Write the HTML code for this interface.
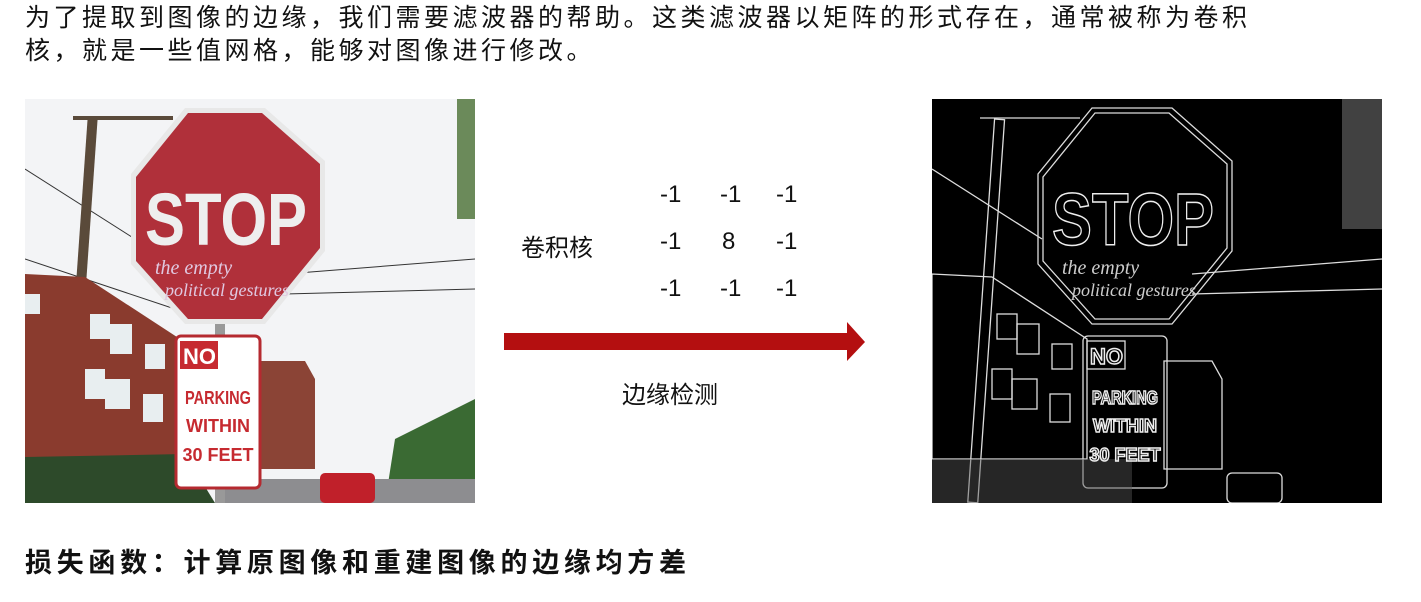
<!DOCTYPE html>
<html><head><meta charset="utf-8"><style>
body{margin:0;width:1421px;height:602px;background:#fff;position:relative;overflow:hidden;font-family:"Liberation Sans","Noto Sans CJK SC",sans-serif;color:#111}
.p{position:absolute;left:25px;top:2px;font-size:25px;line-height:33px;letter-spacing:3.5px;white-space:nowrap}
.t{position:absolute;font-size:24px;white-space:nowrap}
.b{position:absolute;left:25px;top:541px;font-size:27px;font-weight:bold;letter-spacing:4.7px;white-space:nowrap}
svg{position:absolute}
</style></head><body>
<div class="p">为了提取到图像的边缘，我们需要滤波器的帮助。这类滤波器以矩阵的形式存在，通常被称为卷积<br>核，就是一些值网格，能够对图像进行修改。</div>

<svg style="left:25px;top:99px" width="450" height="404" viewBox="0 0 450 404">
<rect width="450" height="404" fill="#f3f4f6"/>
<g stroke="#333" stroke-width="1" fill="none"><line x1="0" y1="70" x2="110" y2="140"/><line x1="0" y1="160" x2="150" y2="210"/><line x1="260" y1="195" x2="450" y2="190"/><line x1="260" y1="175" x2="450" y2="160"/></g>
<rect x="50" y="20" width="10" height="384" fill="#5a4a3a" transform="rotate(4 56 200)"/>
<rect x="48" y="17" width="100" height="4" fill="#5a4a3a"/>
<polygon points="0,175 60,178 155,240 155,360 0,360" fill="#8a3b2e"/>
<polygon points="232,262 280,262 290,280 290,370 232,370" fill="#8b4436"/>
<g fill="#e8eef0"><rect x="65" y="215" width="20" height="25"/><rect x="85" y="225" width="22" height="30"/><rect x="120" y="245" width="20" height="25"/><rect x="60" y="270" width="20" height="30"/><rect x="80" y="280" width="25" height="30"/><rect x="118" y="295" width="20" height="28"/><rect x="0" y="195" width="15" height="20"/></g>
<rect x="432" y="0" width="18" height="120" fill="#6b8a5a"/>
<polygon points="0,358 160,355 190,404 0,404" fill="#2d4a2a"/>
<polygon points="370,340 450,300 450,404 360,404" fill="#3a6a33"/>
<rect x="190" y="380" width="260" height="24" fill="#8d8d90"/>
<rect x="295" y="374" width="55" height="30" rx="5" fill="#c0202a"/>
<rect x="190" y="220" width="10" height="184" fill="#999"/>
<polygon points="160,9 240,9 300,62 300,152 240,225 160,225 106,165 106,75" fill="#e8e8e8"/>
<polygon points="163,14 237,14 295,65 295,149 237,220 163,220 111,162 111,78" fill="#b0303a"/>
<text x="120" y="146" font-family="Liberation Sans" font-size="74" fill="#eee" font-weight="bold" textLength="162" lengthAdjust="spacingAndGlyphs">STOP</text>
<text x="130" y="175" font-family="Liberation Serif" font-style="italic" font-size="20" fill="#e0c8e0">the empty</text>
<text x="140" y="197" font-family="Liberation Serif" font-style="italic" font-size="18" fill="#e0c8e0">political gestures</text>
<rect x="151" y="237" width="84" height="152" rx="5" fill="#fff" stroke="#b52a30" stroke-width="3"/>
<rect x="155" y="242" width="38" height="28" fill="#c62a30"/>
<text x="158" y="265" font-size="22" font-weight="bold" fill="#fff" font-family="Liberation Sans">NO</text>
<text x="193" y="305" text-anchor="middle" font-size="18" font-weight="bold" fill="#c62a30" font-family="Liberation Sans" textLength="66" lengthAdjust="spacingAndGlyphs">PARKING</text>
<text x="193" y="333" text-anchor="middle" font-size="18" font-weight="bold" fill="#c62a30" font-family="Liberation Sans">WITHIN</text>
<text x="193" y="362" text-anchor="middle" font-size="18" font-weight="bold" fill="#c62a30" font-family="Liberation Sans">30 FEET</text>
</svg>

<div class="t" style="left:521px;top:228px">卷积核</div>
<div class="t" style="left:660px;top:181px">-1</div><div class="t" style="left:720px;top:181px">-1</div><div class="t" style="left:776px;top:181px">-1</div>
<div class="t" style="left:660px;top:228px">-1</div><div class="t" style="left:722px;top:228px">8</div><div class="t" style="left:776px;top:228px">-1</div>
<div class="t" style="left:660px;top:275px">-1</div><div class="t" style="left:720px;top:275px">-1</div><div class="t" style="left:776px;top:275px">-1</div>
<svg style="left:504px;top:322px" width="362" height="40"><rect x="0" y="11" width="344" height="17" fill="#b40f10"/><polygon points="343,0 361,20 343,39" fill="#b40f10"/></svg>
<div class="t" style="left:622px;top:375px">边缘检测</div>

<svg style="left:932px;top:99px" width="450" height="404" viewBox="0 0 450 404">
<rect width="450" height="404" fill="#000"/>
<g stroke="#ddd" stroke-width="1.3" fill="none">
<line x1="0" y1="70" x2="110" y2="140"/><line x1="260" y1="195" x2="450" y2="190"/><line x1="260" y1="175" x2="450" y2="160"/>
<rect x="50" y="20" width="10" height="384" transform="rotate(4 56 200)"/>
<line x1="48" y1="19" x2="148" y2="19"/>
<polygon points="0,175 60,178 155,240 155,360 0,360"/>
<rect x="65" y="215" width="20" height="25"/><rect x="85" y="225" width="22" height="30"/><rect x="120" y="245" width="20" height="25"/><rect x="60" y="270" width="20" height="30"/><rect x="80" y="280" width="25" height="30"/><rect x="118" y="295" width="20" height="28"/>
<polygon points="232,262 280,262 290,280 290,370 232,370"/>
<polygon points="160,9 240,9 300,62 300,152 240,225 160,225 106,165 106,75"/>
<polygon points="163,14 237,14 295,65 295,149 237,220 163,220 111,162 111,78"/>
<rect x="151" y="237" width="84" height="152" rx="5"/>
<rect x="155" y="242" width="38" height="28"/>
<rect x="295" y="374" width="55" height="30" rx="5"/>
</g>
<rect x="410" y="0" width="40" height="130" fill="#777" opacity=".55"/>
<rect x="0" y="360" width="200" height="44" fill="#555" opacity=".45"/>
<g fill="none" stroke="#eee" stroke-width="1.5" font-family="Liberation Sans" font-weight="bold">
<text x="120" y="146" font-size="74" textLength="162" lengthAdjust="spacingAndGlyphs">STOP</text>
<text x="193" y="305" text-anchor="middle" font-size="18" textLength="66" lengthAdjust="spacingAndGlyphs">PARKING</text>
<text x="193" y="333" text-anchor="middle" font-size="18">WITHIN</text>
<text x="193" y="362" text-anchor="middle" font-size="18">30 FEET</text>
<text x="158" y="265" font-size="22">NO</text>
</g>
<text x="130" y="175" font-family="Liberation Serif" font-style="italic" font-size="20" fill="#ccc">the empty</text>
<text x="140" y="197" font-family="Liberation Serif" font-style="italic" font-size="18" fill="#ccc">political gestures</text>
</svg>

<div class="b">损失函数：计算原图像和重建图像的边缘均方差</div>
</body></html>
